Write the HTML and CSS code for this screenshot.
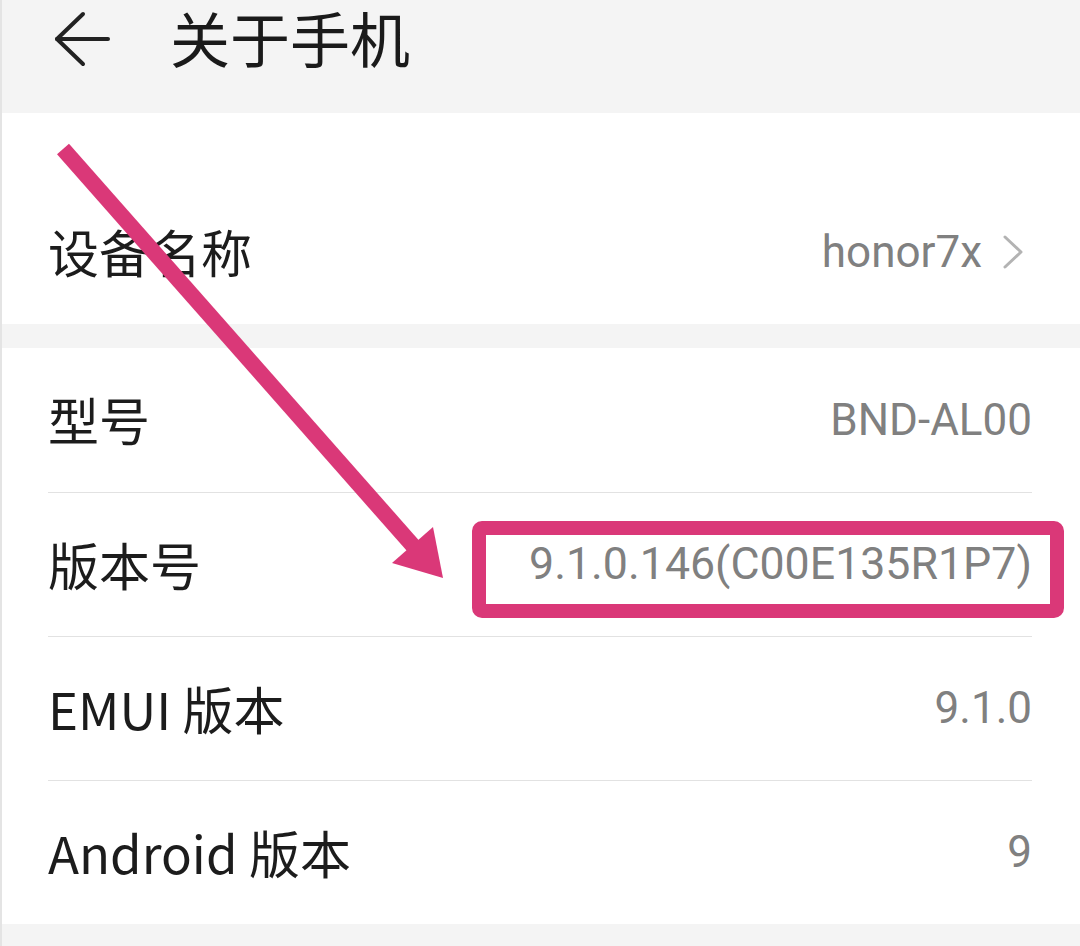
FILE: index.html
```html
<!DOCTYPE html>
<html lang="zh-CN">
<head>
<meta charset="utf-8">
<title>关于手机</title>
<link rel="stylesheet" href="styles.css">
</head>
<body>
<div class="screen">
  <header class="topbar">
    <svg class="back" width="64" height="60" viewBox="0 0 64 60">
      <line x1="4" y1="30" x2="55" y2="30" stroke="#222" stroke-width="4" stroke-linecap="round"/>
      <polyline points="30,5 4,30 30,55" fill="none" stroke="#222" stroke-width="4" stroke-linecap="round" stroke-linejoin="round"/>
    </svg>
    <h1 class="title">关于手机</h1>
  </header>

  <section class="card card-first">
    <div class="row">
      <span class="label">设备名称</span>
      <span class="value value-link">honor7x
        <svg class="chev" width="22" height="36" viewBox="0 0 22 36">
          <path d="M3 3 L19 18 L3 33" fill="none" stroke="#b3b3b3" stroke-width="3" stroke-linecap="round" stroke-linejoin="round"/>
        </svg>
      </span>
    </div>
  </section>

  <section class="card">
    <div class="row"><span class="label">型号</span><span class="value">BND-AL00</span></div>
    <div class="row"><span class="label">版本号</span><span class="value value-build">9.1.0.146(C00E135R1P7)</span></div>
    <div class="row"><span class="label">EMUI 版本</span><span class="value">9.1.0</span></div>
    <div class="row"><span class="label">Android 版本</span><span class="value">9</span></div>
  </section>

  <svg class="annot" width="1080" height="946" viewBox="0 0 1080 946">
    <line x1="63" y1="149" x2="415" y2="548" stroke="#da3878" stroke-width="16"/>
    <polygon points="392,563 433,527 443,578" fill="#da3878"/>
    <rect x="479" y="528" width="578" height="83" rx="3" fill="none" stroke="#da3878" stroke-width="14"/>
  </svg>
</div>
</body>
</html>
```
FILE: styles.css
```css
html, body {
  margin: 0;
  padding: 0;
}
body {
  background: #f4f4f4;
  font-family: "Noto Sans CJK SC", "Noto Sans", sans-serif;
  color: #1c1c1c;
}
.screen {
  position: relative;
  width: 1080px;
  height: 946px;
  overflow: hidden;
  box-sizing: border-box;
  border-left: 2px solid #e4e4e4;
}
.topbar {
  height: 113px;
  display: flex;
  align-items: flex-start;
  box-sizing: border-box;
  padding-left: 51px;
}
.back {
  display: block;
  flex: none;
  margin-top: 9px;
}
.title {
  margin: 2px 0 0 53px;
  font-size: 60px;
  font-weight: 400;
  line-height: 70px;
  color: #1a1a1a;
  white-space: nowrap;
}
.card {
  background: #fff;
  margin-bottom: 24px;
}
.card-first {
  padding-top: 67px;
}
.row {
  height: 144px;
  margin: 0 48px 0 46px;
  display: flex;
  align-items: center;
  justify-content: space-between;
  box-sizing: border-box;
}
.row + .row {
  border-top: 1px solid #e2e2e2;
}
.label {
  font-size: 51px;
  color: #1c1c1c;
  line-height: 1.2;
  white-space: nowrap;
}
.value {
  font-family: Roboto, "Noto Sans", sans-serif;
  font-size: 44px;
  color: #808080;
  line-height: 1.2;
  white-space: nowrap;
}
.value-build {
  font-size: 44.7px;
}
.value-link {
  display: flex;
  align-items: center;
  gap: 20px;
  padding-right: 8px;
}
.chev {
  display: block;
}
.annot {
  position: absolute;
  left: -2px;
  top: 0;
  pointer-events: none;
}
```
